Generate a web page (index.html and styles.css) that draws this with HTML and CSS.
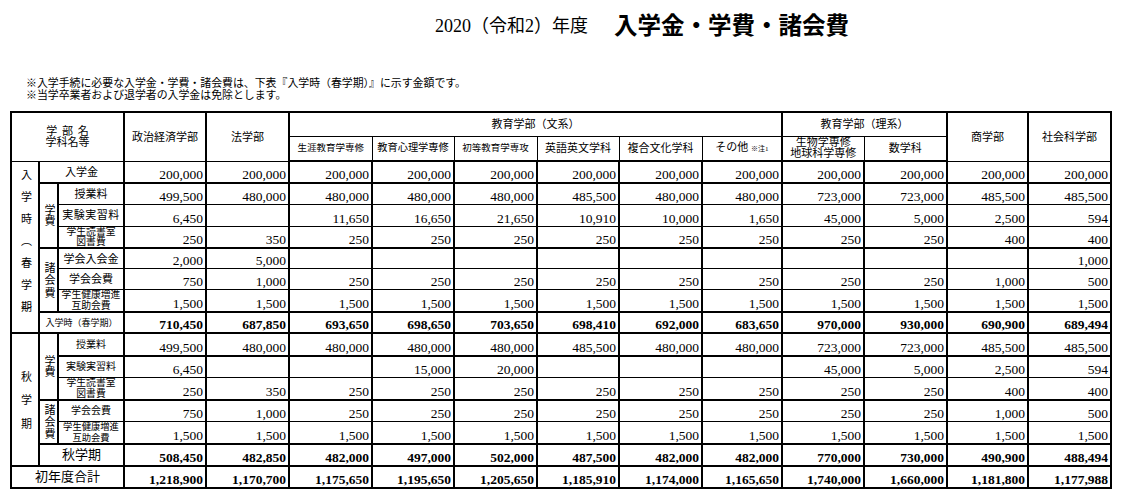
FILE: index.html
```html
<!DOCTYPE html>
<html lang="ja">
<head>
<meta charset="utf-8">
<title>2020（令和2）年度 入学金・学費・諸会費</title>
<link rel="stylesheet" href="styles.css">
</head>
<body>
<header class="title">
  <span class="year">2020（令和2）年度</span>
  <h1 class="main">入学金・学費・諸会費</h1>
</header>
<div class="notes">
  <p>※入学手続に必要な入学金・学費・諸会費は、下表『入学時（春学期）』に示す金額です。</p>
  <p>※当学卒業者および退学者の入学金は免除とします。</p>
</div>
<table class="fees">
  <colgroup>
    <col class="w28"><col class="w19"><col class="w66">
    <col class="w82"><col class="w83"><col class="w83"><col class="w82"><col class="w83"><col class="w82">
    <col class="w83"><col class="w80"><col class="w82"><col class="w83"><col class="w81"><col class="w83">
  </colgroup>
  <thead>
    <tr class="h1">
      <th colspan="3" rowspan="2" class="corner">学 部 名<br>学科名等</th>
      <th rowspan="2">政治経済学部</th>
      <th rowspan="2">法学部</th>
      <th colspan="6" class="grp">教育学部（文系）</th>
      <th colspan="2" class="grp">教育学部（理系）</th>
      <th rowspan="2">商学部</th>
      <th rowspan="2">社会科学部</th>
    </tr>
    <tr class="h2">
      <th class="sub xs">生涯教育学専修</th>
      <th class="sub s10">教育心理学専修</th>
      <th class="sub xs">初等教育学専攻</th>
      <th class="sub">英語英文学科</th>
      <th class="sub">複合文化学科</th>
      <th class="sub end">その他 <span class="note">※注1</span></th>
      <th class="sub two">生物学専修<br>地球科学専修</th>
      <th class="sub">数学科</th>
    </tr>
  </thead>
  <tbody>
    <tr class="ra tb">
      <td rowspan="8" class="vcol top"><span class="vt sp">入学時（春学<span class="tight">期</span><span class="ls0">）</span></span></td>
      <td colspan="2" class="lb">入学金</td>
      <td>200,000</td><td>200,000</td><td>200,000</td><td>200,000</td><td>200,000</td><td>200,000</td>
      <td>200,000</td><td>200,000</td><td>200,000</td><td>200,000</td><td>200,000</td><td>200,000</td>
    </tr>
    <tr class="rb">
      <td rowspan="3" class="vcol mid"><span class="vt g">学<span class="ls0">費</span></span></td>
      <td class="lb">授業料</td>
      <td>499,500</td><td>480,000</td><td>480,000</td><td>480,000</td><td>480,000</td><td>485,500</td>
      <td>480,000</td><td>480,000</td><td>723,000</td><td>723,000</td><td>485,500</td><td>485,500</td>
    </tr>
    <tr class="rb">
      <td class="lb wide">実験実習料</td>
      <td>6,450</td><td></td><td>11,650</td><td>16,650</td><td>21,650</td><td>10,910</td>
      <td>10,000</td><td>1,650</td><td>45,000</td><td>5,000</td><td>2,500</td><td>594</td>
    </tr>
    <tr class="rb tb">
      <td class="lb two">学生読書室<br>図書費</td>
      <td>250</td><td>350</td><td>250</td><td>250</td><td>250</td><td>250</td>
      <td>250</td><td>250</td><td>250</td><td>250</td><td>400</td><td>400</td>
    </tr>
    <tr class="re">
      <td rowspan="3" class="vcol mid"><span class="vt k">諸会<span class="ls0">費</span></span></td>
      <td class="lb">学会入会金</td>
      <td>2,000</td><td>5,000</td><td></td><td></td><td></td><td></td>
      <td></td><td></td><td></td><td></td><td></td><td>1,000</td>
    </tr>
    <tr class="re">
      <td class="lb">学会会費</td>
      <td>750</td><td>1,000</td><td>250</td><td>250</td><td>250</td><td>250</td>
      <td>250</td><td>250</td><td>250</td><td>250</td><td>1,000</td><td>500</td>
    </tr>
    <tr class="rb tb">
      <td class="lb two">学生健康増進<br>互助会費</td>
      <td>1,500</td><td>1,500</td><td>1,500</td><td>1,500</td><td>1,500</td><td>1,500</td>
      <td>1,500</td><td>1,500</td><td>1,500</td><td>1,500</td><td>1,500</td><td>1,500</td>
    </tr>
    <tr class="rb tb tot">
      <td colspan="2" class="lb tiny">入学時（春学期）</td>
      <td>710,450</td><td>687,850</td><td>693,650</td><td>698,650</td><td>703,650</td><td>698,410</td>
      <td>692,000</td><td>683,650</td><td>970,000</td><td>930,000</td><td>690,900</td><td>689,494</td>
    </tr>
    <tr class="ri tb">
      <td rowspan="6" class="vcol mid"><span class="vt au">秋学<span class="ls0">期</span></span></td>
      <td rowspan="3" class="vcol mid"><span class="vt g">学<span class="ls0">費</span></span></td>
      <td class="lb sm">授業料</td>
      <td>499,500</td><td>480,000</td><td>480,000</td><td>480,000</td><td>480,000</td><td>485,500</td>
      <td>480,000</td><td>480,000</td><td>723,000</td><td>723,000</td><td>485,500</td><td>485,500</td>
    </tr>
    <tr class="rj">
      <td class="lb sm">実験実習料</td>
      <td>6,450</td><td></td><td></td><td>15,000</td><td>20,000</td><td></td>
      <td></td><td></td><td>45,000</td><td>5,000</td><td>2,500</td><td>594</td>
    </tr>
    <tr class="rj tb">
      <td class="lb two">学生読書室<br>図書費</td>
      <td>250</td><td>350</td><td>250</td><td>250</td><td>250</td><td>250</td>
      <td>250</td><td>250</td><td>250</td><td>250</td><td>400</td><td>400</td>
    </tr>
    <tr class="rj">
      <td rowspan="2" class="vcol mid"><span class="vt k2">諸会<span class="ls0">費</span></span></td>
      <td class="lb sm">学会会費</td>
      <td>750</td><td>1,000</td><td>250</td><td>250</td><td>250</td><td>250</td>
      <td>250</td><td>250</td><td>250</td><td>250</td><td>1,000</td><td>500</td>
    </tr>
    <tr class="rj tb">
      <td class="lb two sm2">学生健康増進<br>互助会費</td>
      <td>1,500</td><td>1,500</td><td>1,500</td><td>1,500</td><td>1,500</td><td>1,500</td>
      <td>1,500</td><td>1,500</td><td>1,500</td><td>1,500</td><td>1,500</td><td>1,500</td>
    </tr>
    <tr class="rj tb tot">
      <td colspan="2" class="lb big">秋学期</td>
      <td>508,450</td><td>482,850</td><td>482,000</td><td>497,000</td><td>502,000</td><td>487,500</td>
      <td>482,000</td><td>482,000</td><td>770,000</td><td>730,000</td><td>490,900</td><td>488,494</td>
    </tr>
    <tr class="rj tot">
      <td colspan="3" class="lb big">初年度合計</td>
      <td>1,218,900</td><td>1,170,700</td><td>1,175,650</td><td>1,195,650</td><td>1,205,650</td><td>1,185,910</td>
      <td>1,174,000</td><td>1,165,650</td><td>1,740,000</td><td>1,660,000</td><td>1,181,800</td><td>1,177,988</td>
    </tr>
  </tbody>
</table>
</body>
</html>
```

FILE: styles.css
```css
* { box-sizing: border-box; }
html, body { margin: 0; padding: 0; background: #fff; }
body {
  width: 1122px;
  color: #000;
  font-family: "Liberation Serif", "Noto Sans CJK JP", serif;
}

/* ---------- title ---------- */
.title {
  display: flex;
  align-items: center;
  gap: 26px;
  height: 50px;
  padding-left: 435px;
}
.year {
  font-size: 18px;
  line-height: 1;
  padding-top: 2px;
}
.main {
  margin: 0;
  font-family: "Noto Sans CJK JP", sans-serif;
  font-weight: 700;
  font-size: 23.5px;
  line-height: 1;
}

/* ---------- notes ---------- */
.notes {
  margin-top: 28px;
  padding-left: 26px;
  font-size: 10.9px;
  line-height: 11.5px;
}
.notes p { margin: 0; }

/* ---------- table ---------- */
.fees {
  border-collapse: collapse;
  table-layout: fixed;
  width: 1102px;
  margin: 10px 0 0 10px;
  border: 2px solid #000;
}
.w28 { width: 28px; }
.w19 { width: 19px; }
.w66 { width: 66px; }
.w80 { width: 80px; }
.w81 { width: 81px; }
.w82 { width: 82px; }
.w83 { width: 83px; }

th, td {
  padding: 0;
  border: 1px solid #000;
  border-left-width: 2px;
  border-right-width: 2px;
  white-space: nowrap;
  overflow: visible;
}

/* header */
thead th {
  font-weight: normal;
  font-size: 11px;
  line-height: 12px;
  text-align: center;
  vertical-align: middle;
}
.h1 { height: 24px; }
.h2 { height: 25px; }
.h2 th { border-bottom-width: 2px; }
.corner { line-height: 11px; word-spacing: 2px; }
.grp { border-bottom-width: 1px; }
thead .sub { border-left-width: 1px; border-right-width: 1px; }
thead .sub.end { border-right-width: 2px; }
thead .xs { font-size: 9.5px; }
thead .s10 { font-size: 10.2px; }
thead .two { line-height: 11px; }
.note { font-size: 7px; }

/* body rows */
.ra { height: 22px; }
.rb { height: 21.5px; }
.re { height: 21px; }
.ri { height: 22.5px; }
.rj { height: 22px; }
.tb > td { border-bottom-width: 2px; }

tbody td {
  text-align: right;
  vertical-align: bottom;
  padding: 0 2px 0 0;
  font-size: 13.5px;
  line-height: 14px;
}
.tot > td { font-weight: bold; }

/* labels */
tbody td.lb {
  text-align: center;
  vertical-align: middle;
  padding: 0;
  font-weight: normal;
  font-size: 11px;
  line-height: 12px;
}
tbody td.lb.wide { font-size: 11px; letter-spacing: 0.5px; }
tbody td.lb.two { font-size: 9.8px; line-height: 10.2px; }
tbody td.lb.sm2 { font-size: 9.3px; }
tbody td.lb.sm { font-size: 10px; }
tbody td.lb.tiny { font-size: 9px; }
tbody td.lb.big { font-size: 13px; }

/* vertical text */
tbody td.vcol {
  text-align: center;
  padding: 0;
  font-size: 0;
  line-height: 0;
  border-bottom-width: 2px;
  font-weight: normal;
}
tbody td.vcol.top { vertical-align: top; padding-top: 7px; }
tbody td.vcol.mid { vertical-align: middle; }
.vt {
  display: inline-block;
  vertical-align: top;
  writing-mode: vertical-rl;
  font-size: 11px;
  line-height: 11px;
}
.vt.sp { letter-spacing: 11px; }
.vt.au { letter-spacing: 12.5px; }
.vt.g { letter-spacing: 0.3px; }
.vt.k { letter-spacing: 1.5px; }
.vt.k2 { letter-spacing: 1px; }
.tight { letter-spacing: -6px; }
.ls0 { letter-spacing: 0; }
```
